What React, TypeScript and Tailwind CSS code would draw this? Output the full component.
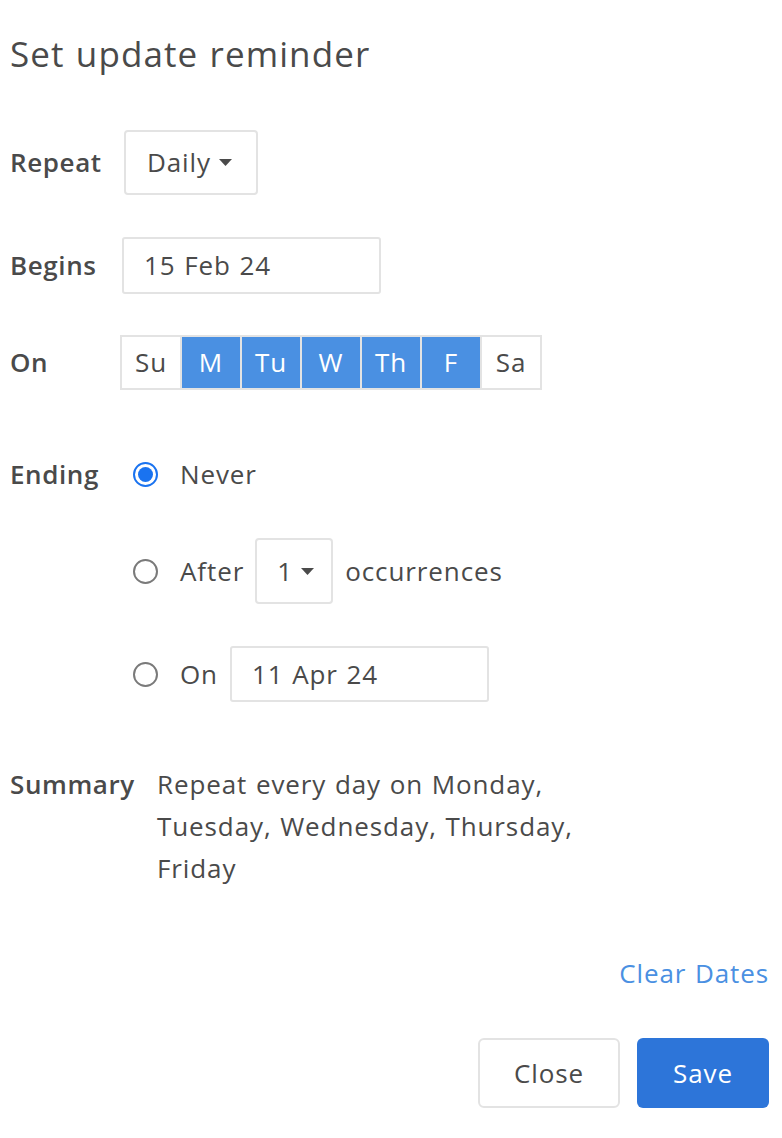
import React from "react";

function Caret() {
  return (
    <svg width="13" height="7" viewBox="0 0 13 7" className="ml-[8px]">
      <path d="M0 0 L13 0 L6.5 7 Z" fill="#4a4a4a" />
    </svg>
  );
}

function Radio({ checked }: { checked?: boolean }) {
  if (checked) {
    return (
      <div className="w-[25px] h-[25px] rounded-full border-[2px] border-[#1a73f0] flex items-center justify-center bg-white">
        <div className="w-[15px] h-[15px] rounded-full bg-[#1a73f0]" />
      </div>
    );
  }
  return <div className="w-[25px] h-[25px] rounded-full border-[2px] border-[#7a7a7a] bg-white" />;
}

const days = [
  { d: "Su", on: false },
  { d: "M", on: true },
  { d: "Tu", on: true },
  { d: "W", on: true },
  { d: "Th", on: true },
  { d: "F", on: true },
  { d: "Sa", on: false },
];

export default function App() {
  return (
    <div className="w-[782px] h-[1138px] bg-white text-[#4a4a4a] text-[26px] tracking-[0.9px] [word-spacing:1px] [font-family:'Open_Sans',Lato,sans-serif] pl-[10px] overflow-hidden">
      <div className="pt-[32px] leading-[44px] text-[35px] tracking-[1.1px]">Set update reminder</div>

      <div className="mt-[54px] flex items-center h-[65px]">
        <div className="font-semibold w-[114px] tracking-[0.6px]">Repeat</div>
        <div className="h-[65px] w-[134px] border-[2px] border-[#e3e3e3] rounded-[4px] flex items-center pl-[21px]">
          Daily
          <Caret />
        </div>
      </div>

      <div className="mt-[42px] flex items-center h-[57px]">
        <div className="font-semibold w-[112px] tracking-[0.6px]">Begins</div>
        <div className="h-[57px] w-[259px] border-[2px] border-[#e3e3e3] rounded-[3px] flex items-center pl-[20px]">
          15 Feb 24
        </div>
      </div>

      <div className="mt-[41px] flex items-center h-[55px]">
        <div className="font-semibold w-[110px] tracking-[0.6px]">On</div>
        <div className="flex h-[55px] border-[2px] border-[#e3e3e3] bg-[#e3e3e3] gap-[2px]">
          {days.map((x) => (
            <div
              key={x.d}
              className={
                x.on
                  ? "w-[58px] h-full flex items-center justify-center bg-[#4a90e2] text-white"
                  : "w-[58px] h-full flex items-center justify-center bg-white"
              }
            >
              {x.d}
            </div>
          ))}
        </div>
      </div>

      <div className="mt-[64px] flex items-center h-[40px]">
        <div className="font-semibold w-[123px] tracking-[0.6px]">Ending</div>
        <Radio checked />
        <div className="ml-[22px]">Never</div>
      </div>

      <div className="mt-[44px] flex items-center h-[66px]">
        <div className="w-[123px]" />
        <Radio />
        <div className="ml-[22px]">After</div>
        <div className="ml-[11px] h-[66px] w-[78px] border-[2px] border-[#e3e3e3] rounded-[4px] flex items-center pl-[20px]">
          1
          <Caret />
        </div>
        <div className="ml-[12px]">occurrences</div>
      </div>

      <div className="mt-[42px] flex items-center h-[56px]">
        <div className="w-[123px]" />
        <Radio />
        <div className="ml-[22px]">On</div>
        <div className="ml-[12px] h-[56px] w-[259px] border-[2px] border-[#e3e3e3] rounded-[3px] flex items-center pl-[20px]">
          11 Apr 24
        </div>
      </div>

      <div className="mt-[61px] flex items-start leading-[42px]">
        <div className="font-semibold w-[147px] tracking-[0.6px]">Summary</div>
        <div className="w-[500px]">
          Repeat every day on Monday,
          <br />
          Tuesday, Wednesday, Thursday,
          <br />
          Friday
        </div>
      </div>

      <div className="mt-[63px] flex justify-end pr-[13px] leading-[42px] text-[#4a90e2]">Clear Dates</div>

      <div className="mt-[44px] flex justify-end pr-[13px] gap-[17px]">
        <div className="w-[142px] h-[70px] border-[2px] border-[#e3e3e3] rounded-[6px] flex items-center justify-center">
          Close
        </div>
        <div className="w-[132px] h-[70px] rounded-[6px] bg-[#2d75d9] text-white flex items-center justify-center">
          Save
        </div>
      </div>
    </div>
  );
}
